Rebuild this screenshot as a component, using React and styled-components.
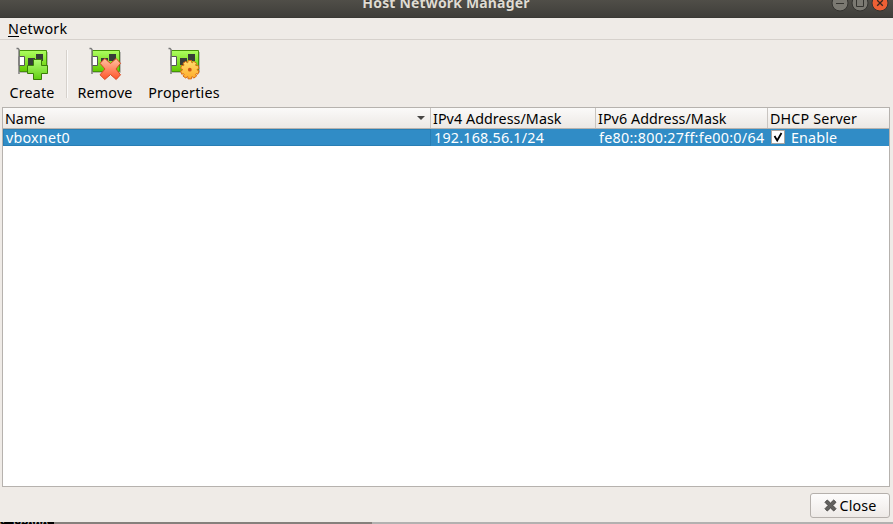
import React from "react";
import styled, { createGlobalStyle } from "styled-components";

const Global = createGlobalStyle`
  * { box-sizing: border-box; }
  body { margin: 0; overflow: hidden; }
`;

const Window = styled.div`
  width: 893px;
  height: 524px;
  display: flex;
  flex-direction: column;
  overflow: hidden;
  background: #efebe7;
  color: #000;
  font: 14.3px/18px "Noto Sans", sans-serif;
  white-space: nowrap;
`;

const TitleBar = styled.header`
  display: grid;
  grid-template-columns: 1fr auto 1fr;
  height: 18px;
  flex: none;
  background: linear-gradient(#504e48, #3f3e3a);
  border-bottom: 1px solid #3a3935;
`;

const Title = styled.h1`
  grid-column: 2;
  margin: -6px 1px 0 0;
  font-size: 14px;
  line-height: 18px;
  font-weight: 700;
  letter-spacing: ${(p) => p.$spacing}px;
  color: #dfdbd2;
  text-shadow: 0 -1px #2c2b28;
`;

const WindowButtons = styled.div`
  display: flex;
  justify-content: flex-end;
  gap: 2px;
  margin-top: -6px;
  padding-right: 4px;
`;

const MenuBar = styled.nav`
  height: 22px;
  flex: none;
  padding: 2px 8px 0;
  border-bottom: 1px solid #d6d1cc;
`;

const Label = styled.span`
  letter-spacing: ${(p) => p.$spacing || 0}px;
`;

const Mnemonic = styled.span`
  display: inline-block;
  height: 17px;
  border-bottom: 1px solid #000;
`;

const ToolBar = styled.div`
  display: flex;
  height: 67px;
  flex: none;
  padding: 8px 0 0 7px;
`;

const ToolButton = styled.button`
  display: flex;
  flex-direction: column;
  align-items: center;
  width: ${(p) => p.$width}px;
  height: 54px;
  padding: 0;
  border: 0;
  background: none;
  color: inherit;
  font: inherit;

  svg { display: block; flex: none; margin-bottom: 3px; }
`;

const ToolSeparator = styled.div`
  width: 2px;
  height: 48px;
  margin: 2px 9px 0 9px;
  border-left: 1px solid #d6d1cc;
  border-right: 1px solid #fbfaf9;
`;

const Table = styled.div`
  height: 380px;
  flex: none;
  margin: 0 3px 0 2px;
  border: 1px solid #b6b2ae;
  background: #fff;
`;

const Row = styled.div`
  display: grid;
  grid-template-columns: 428px 165px 172px 1fr;
`;

const HeaderRow = styled(Row)`
  height: 21px;
  background: linear-gradient(#fbfaf9, #ece8e4);
  border-bottom: 1px solid #b6b2ae;
`;

const HeaderCell = styled.div`
  display: flex;
  align-items: center;
  justify-content: space-between;
  padding: 1px 5px 0 2px;
  border-right: 1px solid #c9c5c1;
  &:last-child { border-right: 0; }
`;

const SelectedRow = styled(Row)`
  height: 17px;
  grid-template-rows: 17px;
  background: #308cc6;
  color: #fff;
  line-height: 18px;
`;

const Cell = styled.div`
  display: flex;
  align-items: flex-start;
  gap: 6px;
  padding: 0 3px;

  svg { margin-top: 1px; }
`;

const FocusedCell = styled(Cell)`
  box-shadow: inset 0 0 0 1px #287eb4;
`;

const Footer = styled.footer`
  display: flex;
  justify-content: flex-end;
  height: 35px;
  flex: none;
  padding: 6px 3px 0 0;
`;

const CloseButton = styled.button`
  display: flex;
  align-items: center;
  justify-content: center;
  gap: 3px;
  width: 80px;
  height: 25px;
  padding: 0;
  border: 1px solid #b5b0ac;
  border-radius: 3px;
  background: linear-gradient(#fdfcfc, #eeeae7);
  color: #000;
  font: inherit;
`;

const Backdrop = styled.div`
  display: grid;
  grid-template-columns: 54px 318px 1fr;
  height: 2px;
  overflow: hidden;
`;

const BackdropStrip = styled.div`
  background: ${(p) => p.$color};
`;

const TerminalStrip = styled(BackdropStrip)`
  overflow: hidden;
  color: #bbb;
  font: 12px/12px "Liberation Mono", monospace;
  span { display: block; margin: -3px 0 0 -2px; }
`;

const gearPoints = Array.from({ length: 10 }, (_, i) =>
  [[-11, 9.3], [11, 9.3], [15, 7.4], [21, 7.4]].map(([offset, radius]) => {
    const angle = ((i * 36 + offset) * Math.PI) / 180;
    return `${(21.8 + radius * Math.sin(angle)).toFixed(2)},${(21.7 - radius * Math.cos(angle)).toFixed(2)}`;
  }).join(" ")
).join(" ");

const overlays = {
  create: <path d="M17.5 11.5h8v6h6v8h-6v6h-8v-6h-6v-8h6z" fill="url(#plusFill)" stroke="#397b08" />,
  remove: (
    <path d="m15.8 10.5 5.7 5 5.7-5 4.3 4.8-4.5 5.7 4.5 5.8-4.3 4.7-5.7-5-5.7 5-4.8-4.7 5-5.8-5-5.7z" fill="url(#crossFill)" stroke="#d84820" strokeLinejoin="round" />
  ),
  properties: (
    <g>
      <polygon points={gearPoints} fill="url(#gearFill)" stroke="#d96b10" strokeLinejoin="round" />
      <circle cx="21.8" cy="21.7" r="1.9" fill="#cd5314" />
    </g>
  ),
};

function NetworkIcon({ kind }) {
  return (
    <svg width="32" height="33" viewBox="0 0 32 33" overflow="visible" aria-hidden="true">
      <defs>
        <linearGradient id="boardFill" x2="0" y2="1"><stop stopColor="#adff60" /><stop offset="1" stopColor="#61c800" /></linearGradient>
        <linearGradient id="plusFill" x2="0" y2="1"><stop stopColor="#b4fc76" /><stop offset="1" stopColor="#60cf10" /></linearGradient>
        <linearGradient id="crossFill" x2="0" y2="1"><stop stopColor="#ffc2a0" /><stop offset="1" stopColor="#ff542b" /></linearGradient>
        <linearGradient id="gearFill" x2="0" y2="1"><stop stopColor="#ffdf70" /><stop offset="1" stopColor="#ffaa28" /></linearGradient>
      </defs>
      <path d="M4 24.5h27.5V4" fill="none" stroke="#b9b8b4" />
      <path d="M3.5 2.5h27v21h-27z" fill="url(#boardFill)" stroke="#469309" />
      <path d="M12 10h7v7h-7zM20 6h7v7h-7z" fill="#363d38" />
      <path d="M3 8.5h5.5v9H3z" fill="#fff" stroke="#555" />
      <path d="M.5.5H2l1 1V26" fill="none" stroke="#777" strokeWidth="1.4" />
      {overlays[kind]}
    </svg>
  );
}

function WindowButton({ kind }) {
  const close = kind === "close";
  return (
    <svg width="18" height="18" viewBox="0 0 18 18" aria-hidden="true">
      <circle cx="9" cy="9" r="8" fill={close ? "#ed6035" : "#7b7972"} stroke="#343330" />
      {kind === "minimize" && <path d="M5 9.5h8" stroke="#34332f" />}
      {kind === "maximize" && <path d="M5.5 5.5h7v7h-7z" fill="none" stroke="#34332f" />}
      {close && <path d="m6.2 6.2 5.6 5.6m0-5.6-5.6 5.6" stroke="#34261f" strokeWidth="1.3" />}
    </svg>
  );
}

export default function App() {
  return (
    <>
      <Global />
      <Window>
        <TitleBar>
          <Title $spacing={0.17}>Host Network Manager</Title>
          <WindowButtons>
            <WindowButton kind="minimize" />
            <WindowButton kind="maximize" />
            <WindowButton kind="close" />
          </WindowButtons>
        </TitleBar>
        <MenuBar><Label $spacing={0.27}><Mnemonic>N</Mnemonic>etwork</Label></MenuBar>
        <ToolBar>
          <ToolButton $width={50}><NetworkIcon kind="create" /><Label $spacing={0.2}>Create</Label></ToolButton>
          <ToolSeparator />
          <ToolButton $width={56}><NetworkIcon kind="remove" /><Label $spacing={0.2}>Remove</Label></ToolButton>
          <ToolButton $width={102}><NetworkIcon kind="properties" /><Label $spacing={0.22}>Properties</Label></ToolButton>
        </ToolBar>
        <Table>
          <HeaderRow>
            <HeaderCell>
              <Label>Name</Label>
              <svg width="8" height="5" viewBox="0 0 8 5"><path d="M0 0h8L4 4z" fill="#474644" /></svg>
            </HeaderCell>
            <HeaderCell><Label $spacing={0.06}>IPv4 Address/Mask</Label></HeaderCell>
            <HeaderCell><Label $spacing={0.06}>IPv6 Address/Mask</Label></HeaderCell>
            <HeaderCell><Label $spacing={0.15}>DHCP Server</Label></HeaderCell>
          </HeaderRow>
          <SelectedRow>
            <FocusedCell><Label $spacing={0.22}>vboxnet0</Label></FocusedCell>
            <Cell><Label $spacing={0.22}>192.168.56.1/24</Label></Cell>
            <Cell><Label $spacing={0.29}>fe80::800:27ff:fe00:0/64</Label></Cell>
            <Cell>
              <svg width="14" height="14" viewBox="0 0 14 14">
                <path d="M.5.5h13v13H.5z" fill="#fff" stroke="#aaa49e" />
                <path d="m3.5 6 2.7 4.5L10.5 3" fill="none" stroke="#000" strokeWidth="1.8" />
              </svg>
              <Label $spacing={0.15}>Enable</Label>
            </Cell>
          </SelectedRow>
        </Table>
        <Footer>
          <CloseButton>
            <svg width="13" height="13" viewBox="0 0 13 13">
              <path d="m3.3 1 3.2 3.1L9.7 1 12 3.3 8.9 6.5 12 9.7 9.7 12 6.5 8.9 3.3 12 1 9.7l3.1-3.2L1 3.3z" fill="#62615f" stroke="#474644" strokeLinejoin="round" />
            </svg>
            <Label $spacing={0.1}>Close</Label>
          </CloseButton>
        </Footer>
        <Backdrop>
          <TerminalStrip $color="#000"><span>s scope</span></TerminalStrip>
          <BackdropStrip $color="#85807c" />
          <BackdropStrip $color="#b2b1b0" />
        </Backdrop>
      </Window>
    </>
  );
}
